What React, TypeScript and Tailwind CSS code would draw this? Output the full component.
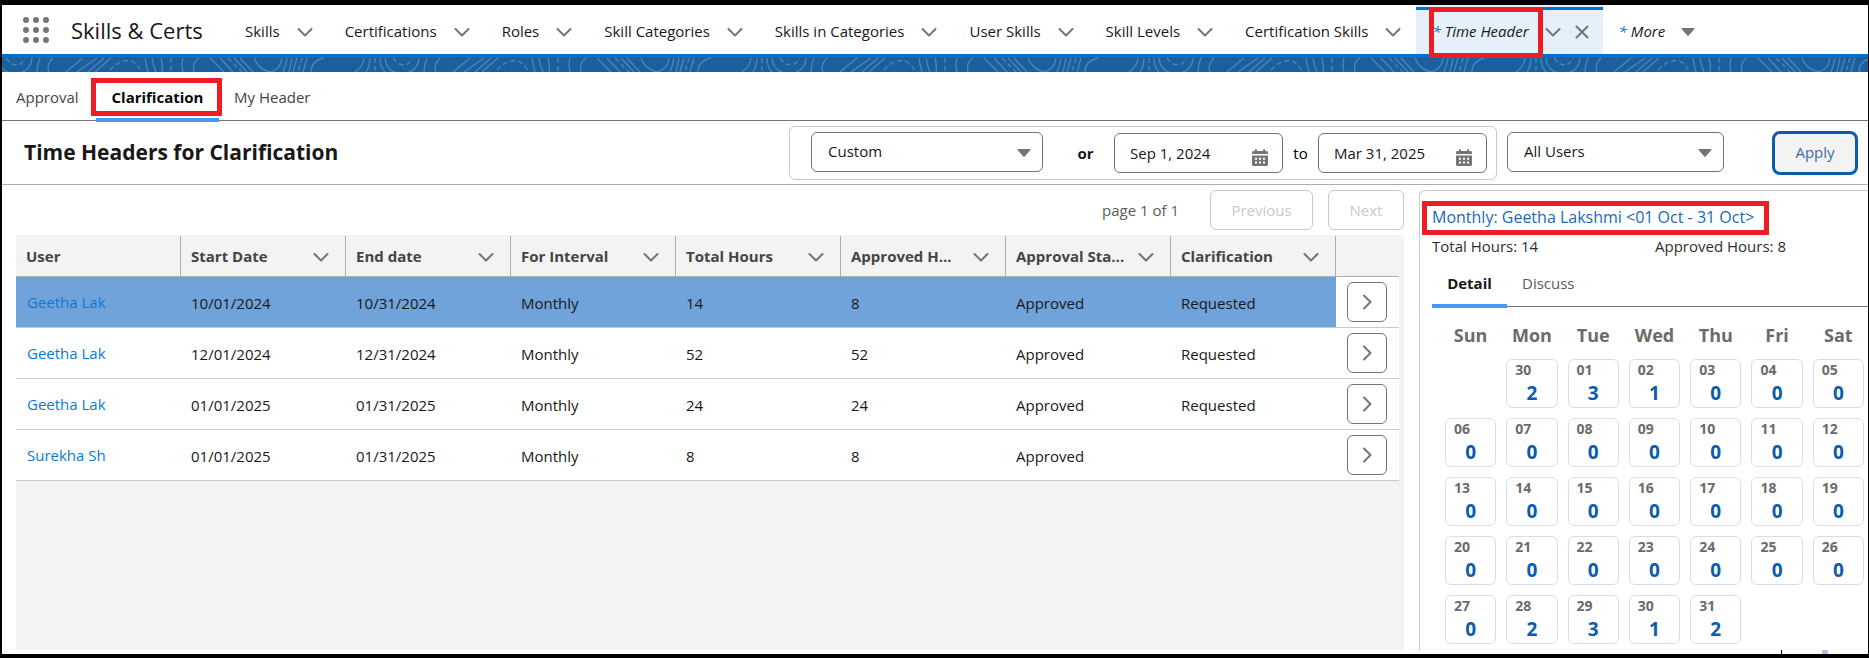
const NAV_ITEMS = [
  "Skills",
  "Certifications",
  "Roles",
  "Skill Categories",
  "Skills in Categories",
  "User Skills",
  "Skill Levels",
  "Certification Skills",
];

const COLUMNS = [
  { label: "Start Date" },
  { label: "End date" },
  { label: "For Interval" },
  { label: "Total Hours" },
  { label: "Approved H...", full: "Approved Hours" },
  { label: "Approval Sta...", full: "Approval Status" },
  { label: "Clarification" },
];

const ROWS = [
  { user: "Geetha Lak", cells: ["10/01/2024", "10/31/2024", "Monthly", "14", "8", "Approved", "Requested"] },
  { user: "Geetha Lak", cells: ["12/01/2024", "12/31/2024", "Monthly", "52", "52", "Approved", "Requested"] },
  { user: "Geetha Lak", cells: ["01/01/2025", "01/31/2025", "Monthly", "24", "24", "Approved", "Requested"] },
  { user: "Surekha Sh", cells: ["01/01/2025", "01/31/2025", "Monthly", "8", "8", "Approved", ""] },
];

const WEEKDAYS = ["Sun", "Mon", "Tue", "Wed", "Thu", "Fri", "Sat"];

const DAYS = [
  ["30", 2], ["01", 3], ["02", 1], ["03", 0], ["04", 0], ["05", 0],
  ["06", 0], ["07", 0], ["08", 0], ["09", 0], ["10", 0], ["11", 0], ["12", 0],
  ["13", 0], ["14", 0], ["15", 0], ["16", 0], ["17", 0], ["18", 0], ["19", 0],
  ["20", 0], ["21", 0], ["22", 0], ["23", 0], ["24", 0], ["25", 0], ["26", 0],
  ["27", 0], ["28", 2], ["29", 3], ["30", 1], ["31", 2],
];

function Chevron() {
  return (
    <svg viewBox="0 0 16 16" className="h-4 w-4 shrink-0" fill="none" stroke="#747474" strokeWidth="2" strokeLinecap="round" strokeLinejoin="round">
      <path d="M1.5 5 L8 11.5 L14.5 5" />
    </svg>
  );
}

function Caret() {
  return (
    <svg viewBox="0 0 14 8" className="h-2 w-3.5 shrink-0" fill="#747474">
      <path d="M1 0 H13 Q14 0 13.4 1 L7.7 7.6 Q7 8.3 6.3 7.6 L0.6 1 Q0 0 1 0Z" />
    </svg>
  );
}

function CalendarIcon() {
  return (
    <svg viewBox="0 0 16 17" className="h-[17px] w-4" fill="#747474">
      <path d="M1.5 2 H3 V0.8 Q3 0 3.9 0 Q4.8 0 4.8 0.8 V2 H11.2 V0.8 Q11.2 0 12.1 0 Q13 0 13 0.8 V2 H14.5 Q16 2 16 3.5 V5 H0 V3.5 Q0 2 1.5 2Z" />
      <path fillRule="evenodd" d="M0 6.5 H16 V15.5 Q16 17 14.5 17 H1.5 Q0 17 0 15.5Z M3 8.7 V10.7 H5 V8.7Z M7 8.7 V10.7 H9 V8.7Z M11 8.7 V10.7 H13 V8.7Z M3 12.5 V14.5 H5 V12.5Z M7 12.5 V14.5 H9 V12.5Z M11 12.5 V14.5 H13 V12.5Z" />
    </svg>
  );
}

// Repeating contour lines under the nav bar
function Topography() {
  return (
    <svg className="block h-[15px] w-full bg-[#1b5f9e]">
      <defs>
        <pattern id="topo" x="338" width="387" height="15" patternUnits="userSpaceOnUse">
          <g fill="none" stroke="#4a86bb" strokeWidth="1.3">
            <path d="M15 15 Q23 10 24 1 M30 1 Q30 9 26 15 M40 1 Q40 10 45 15 M45 1 Q46 15 62 17 Q78 15 79 1 M87 1 Q84 8 84 15 M100 1 Q93 8 96 15" />
            <path d="M130 1 L113 15 M144 1 L124 15 M151 1 L135 15 M158 1 L142 15 M192 1 Q193 8 195 15 M199 1 Q200 8 203 15 M208 1 Q210 8 209 15" />
            <path d="M230 1 Q228 8 230 15 M246 1 Q239 5 241 15 M257 1 L271 15 M267 1 L280 15 M281 1 L294 15 M287 1 L300 15" />
            <path d="M301 1 Q305 12 317 15 Q328 12 329 1 M334 1 Q333 8 330 15 M339 1 L336 15 M344 1 L340 15 M354 1 L350 15 M371 1 Q358 4 358 15" />
            <path strokeDasharray="5 3" d="M35 1 V15 M53 1 Q58 8 64 8 Q69 8 72 1 M157 13 Q165 4 175 3.5 Q183 4 188 14 M218 1 V15 M275 1 L289 15 M349 1 L345 15" />
          </g>
        </pattern>
      </defs>
      <rect width="100%" height="100%" fill="url(#topo)" />
    </svg>
  );
}

type PickerProps = { id: string; label: string; value: string; className: string };

function Picker({ id, label, value, className }: PickerProps) {
  return (
    <div className={`relative pb-0.5 ${className}`}>
      <select id={id} aria-label={label} className="block h-10 w-full appearance-none rounded-md border border-[#747474] bg-white pl-4 text-[#181818]">
        <option>{value}</option>
      </select>
      <span className="pointer-events-none absolute top-[17px] right-3">
        <Caret />
      </span>
    </div>
  );
}

function DateInput({ id, label, value }: { id: string; label: string; value: string }) {
  return (
    <div className="relative w-[169px]">
      <input id={id} aria-label={label} defaultValue={value} className="block h-10 w-full rounded-md border border-[#747474] bg-white pl-[15px] text-[#181818]" />
      <button aria-label="Pick a date" className="absolute top-4 right-[15px]">
        <CalendarIcon />
      </button>
    </div>
  );
}

function NavBar() {
  return (
    <header>
      <nav className="flex h-[49px] items-center pl-[21px] text-[#181818]">
        <button aria-label="App Launcher" className="grid grid-cols-3 gap-1">
          {[...Array(9)].map((_, i) => (
            <span key={i} className="h-1.5 w-1.5 rounded-full bg-[#747474]" />
          ))}
        </button>
        <span className="ml-[22px] w-[129px] pt-0.5 text-[22px] whitespace-nowrap">Skills &amp; Certs</span>
        <div className="ml-[45px] flex h-full items-center gap-8 pt-1">
          {NAV_ITEMS.map((item) => (
            <div key={item} className="flex items-center gap-[17px]">
              <a href="#" className="whitespace-nowrap">{item}</a>
              <button aria-label={`${item} list`}>
                <Chevron />
              </button>
            </div>
          ))}
        </div>
        <div className="relative ml-[15px] flex h-full items-center bg-[#e5f0fa] pt-1 pr-3.5 pl-4">
          <span className="absolute inset-x-0 top-0.5 h-[3px] bg-[#0070d2]" />
          <a href="#" className="italic whitespace-nowrap">
            <span className="mr-1 text-[#0070d2]">*</span>Time Header
          </a>
          <button aria-label="Time Header list" className="ml-4">
            <Chevron />
          </button>
          <button aria-label="Close tab" className="ml-3.5">
            <svg viewBox="0 0 14 14" className="h-3.5 w-3.5" stroke="#747474" strokeWidth="2" strokeLinecap="round">
              <path d="M1.5 1.5 L12.5 12.5 M12.5 1.5 L1.5 12.5" />
            </svg>
          </button>
          <span className="absolute top-0.5 left-[13px] z-10 h-[51px] w-[114px] border-[5px] border-[#ee1c25]" />
        </div>
        <button className="ml-4 flex items-center pt-1 italic">
          <span className="mr-1 text-[#0070d2]">*</span>More
          <span className="ml-4">
            <Caret />
          </span>
        </button>
      </nav>
      <div className="h-[3px] bg-[#0070d2]" />
      <Topography />
    </header>
  );
}

function Filters() {
  return (
    <div className="flex h-16 items-center border-b border-[#aeaeae] pl-[22px]">
      <h1 className="text-[21px] font-bold text-[#181818]">Time Headers for Clarification</h1>
      <div className="ml-auto flex h-[54px] items-center rounded-md border border-[#c9c9c9] pr-[9px] pl-[21px]">
        <Picker id="range" label="Range" value="Custom" className="w-[232px]" />
        <span className="w-[71px] pt-0.5 pl-3.5 text-center font-bold text-[#181818]">or</span>
        <DateInput id="from" label="From" value="Sep 1, 2024" />
        <label htmlFor="to" className="w-[35px] pt-0.5 text-center">to</label>
        <DateInput id="to" label="To" value="Mar 31, 2025" />
      </div>
      <Picker id="users" label="Users" value="All Users" className="ml-2.5 w-[217px]" />
      <button className="mr-2.5 ml-12 h-11 w-[86px] rounded-lg border-[3px] border-[#0b5cab] bg-[#f3f3f3] text-[#3b6ba5]">
        Apply
      </button>
    </div>
  );
}

function HeaderTable() {
  return (
    <section className="flex w-[1388px] shrink-0 flex-col">
      <div className="flex h-[50px] items-center justify-end gap-[15px]">
        <span className="mr-4 text-[#5c5c5c]">page 1 of 1</span>
        <button disabled className="h-10 w-[103px] rounded-md border border-[#c9c9c9] text-[#c9c9c9]">Previous</button>
        <button disabled className="h-10 w-[76px] rounded-md border border-[#c9c9c9] text-[#c9c9c9]">Next</button>
      </div>
      <div className="flex-1 bg-[#f3f3f3]">
        <table className="w-[1383px] table-fixed border-separate border-spacing-0 text-left">
          <thead>
            <tr className="h-[42px] text-[#444444]">
              <th className="w-[165px] border-b border-[#aeaeae] p-0">
                <div className="flex h-10 items-center border-r border-[#aeaeae] pt-0.5 pl-2.5 font-bold">User</div>
              </th>
              {COLUMNS.map(({ label, full }) => (
                <th key={label} title={full} className="w-[165px] border-b border-[#aeaeae] p-0">
                  <div className="flex h-10 items-center justify-between border-r border-[#aeaeae] pt-0.5 pr-4 pl-2.5 font-bold">
                    <span className="whitespace-nowrap">{label}</span>
                    <button aria-label={`${full ?? label} actions`}>
                      <Chevron />
                    </button>
                  </div>
                </th>
              ))}
              <th className="border-b border-[#aeaeae]" />
            </tr>
          </thead>
          <tbody>
            {ROWS.map((row, i) => {
              const cell = i === 0 ? "bg-[#70a3d9]" : "bg-white";
              return (
                <tr key={i} className="h-[51px] text-[#181818]">
                  <td className={`border-b border-[#c9c9c9] p-0 pl-[11px] ${cell}`}>
                    <a href="#" className="text-[#0b7ad6]">{row.user}</a>
                  </td>
                  {row.cells.map((text, j) => (
                    <td key={j} className={`border-b border-[#c9c9c9] p-0 pt-0.5 pl-2.5 ${cell}`}>{text}</td>
                  ))}
                  <td className="border-b border-[#c9c9c9] bg-white p-0 pl-[11px]">
                    <button aria-label="Open" className="flex h-10 w-10 items-center justify-center rounded-md border border-[#747474]">
                      <span className="-rotate-90">
                        <Chevron />
                      </span>
                    </button>
                  </td>
                </tr>
              );
            })}
          </tbody>
        </table>
      </div>
    </section>
  );
}

function DetailPanel() {
  return (
    <aside className="mt-[5px] ml-[15px] flex-1 rounded-tl-md border-t border-l border-[#c9c9c9] pl-3">
      <div className="relative mt-2.5 h-[34px] text-base leading-8">
        <a href="#" className="text-[#1b69b6]">Monthly: Geetha Lakshmi &lt;01 Oct - 31 Oct&gt;</a>
        <span className="absolute top-0 -left-2.5 h-[34px] w-[347px] border-[5px] border-[#ee1c25]" />
      </div>
      <div className="flex h-6 leading-[22px] text-[#2e2e2e]">
        <span className="w-[223px]">Total Hours: 14</span>
        <span>Approved Hours: 8</span>
      </div>
      <div className="flex h-12 border-b border-[#747474]">
        <button className="relative w-[75px] pt-0.5 font-bold text-[#181818]">
          Detail
          <span className="absolute inset-x-0 -bottom-0.5 h-1 bg-[#4596f7]" />
        </button>
        <button className="ml-[15px] pt-0.5 text-[#5c5c5c]">Discuss</button>
      </div>
      <div className="mt-3.5 mr-1 ml-[13px] grid grid-cols-7 gap-x-2.5 text-center text-lg font-bold text-[#6b6b6b]">
        {WEEKDAYS.map((day) => (
          <span key={day}>{day}</span>
        ))}
      </div>
      <div className="mt-2.5 mr-1 mb-[5px] ml-[13px] grid grid-cols-7 gap-2.5 font-bold">
        <span />
        {DAYS.map(([day, hours], i) => (
          <button key={i} className="flex h-[49px] flex-col rounded-md border border-[#d8dde6]">
            <span className="self-start pl-2 text-sm leading-5 text-[#6b6b6b]">{day}</span>
            <span className="self-center text-[19px] leading-[26px] text-[#0b5cab]">{hours}</span>
          </button>
        ))}
      </div>
    </aside>
  );
}

export default function App() {
  return (
    <div className="flex min-h-screen flex-col border-t-[5px] border-r border-b-4 border-l-2 border-black bg-white font-['Segoe_UI','Open_Sans',sans-serif] text-[15px]">
      <NavBar />
      <div className="flex h-[49px] items-center border-b border-[#747474] pl-3.5 text-[#444444]">
        <button className="w-[65px] pt-0.5 text-left">Approval</button>
        <button className="relative ml-[15px] h-full w-[123px] pt-0.5 text-center font-bold text-[#080707]">
          Clarification
          <span className="absolute inset-x-0 -bottom-0.5 h-1 bg-[#4596f7]" />
          <span className="absolute top-1.5 -left-[5px] h-[38px] w-[131px] border-[5px] border-[#ee1c25]" />
        </button>
        <button className="ml-[15px] pt-0.5">My Header</button>
      </div>
      <Filters />
      <main className="flex flex-1 pl-3.5">
        <HeaderTable />
        <DetailPanel />
      </main>
      <div className="flex h-1 justify-end">
        <span className="mr-10 w-px bg-black" />
        <span className="mr-10 w-1.5 bg-[#b0c4de]" />
      </div>
    </div>
  );
}
